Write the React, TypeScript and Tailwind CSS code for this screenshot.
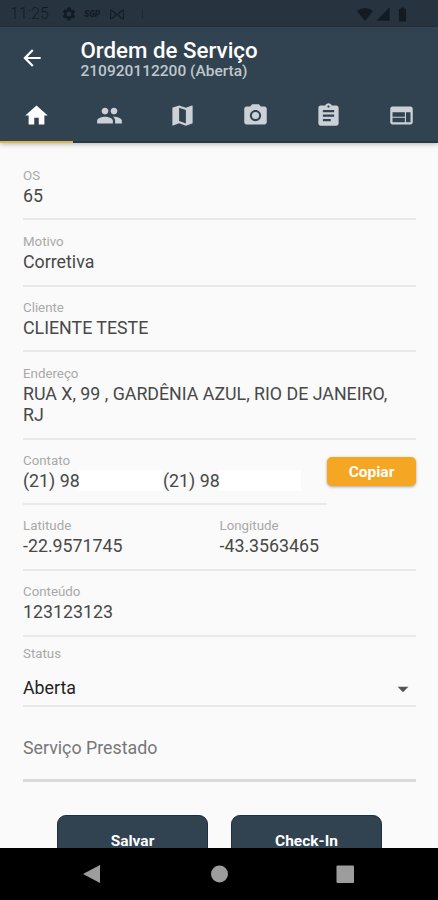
import type { ReactNode } from 'react'
import clsx from 'clsx'
import {
  MdArrowBack,
  MdArrowDropDown,
  MdAssignment,
  MdBatteryFull,
  MdCameraAlt,
  MdHome,
  MdMap,
  MdPeople,
  MdSettings,
  MdSignalCellular4Bar,
  MdWeb,
} from 'react-icons/md'

const tabs = [
  { name: 'home', icon: MdHome },
  { name: 'people', icon: MdPeople },
  { name: 'map', icon: MdMap },
  { name: 'photos', icon: MdCameraAlt },
  { name: 'tasks', icon: MdAssignment },
  { name: 'web', icon: MdWeb },
]

function StatusBar() {
  return (
    <div className="flex h-[27px] shrink-0 items-center bg-[#27343f] pt-px pr-[27px] pl-[10px] text-[#121b24]">
      <span className="w-[51px] text-[16px] leading-none font-light">11:25</span>
      <MdSettings className="size-4" />
      <span className="ml-[7px] w-[18px] text-[8.5px] leading-none font-black italic">SGP</span>
      <svg className="ml-[7px] h-[11px] w-[16px]" viewBox="0 0 17 13" fill="none" stroke="currentColor" strokeWidth="1.1">
        <path d="M1 1v11l5-4V5zM16 1v11l-5-4V5zM3 1l11 11M14 1L3 12" />
      </svg>
      <span className="ml-[17px] h-[10px] w-px bg-[#1d2832]" />
      <svg className="ml-auto h-[13px] w-4" viewBox="0 0 16 13" fill="currentColor">
        <path d="M0 3Q8-3 16 3L8 13z" />
      </svg>
      <MdSignalCellular4Bar className="ml-[2px] size-[16px]" />
      <MdBatteryFull className="ml-[3px] size-[17px]" />
    </div>
  )
}

function Header() {
  return (
    <header className="relative z-10 flex h-[116px] shrink-0 flex-col bg-[#314250] shadow-[0_1px_5px_rgba(0,0,0,0.3)]">
      <div className="flex h-[61px] items-center pt-[2px] pl-[19px] text-white">
        <MdArrowBack className="-mt-px size-[26px]" />
        <div className="ml-[35.5px] pt-px">
          <h1 className="text-[22.3px] leading-[24px] font-medium">Ordem de Serviço</h1>
          <p className="text-[15.5px] leading-[18px] font-medium text-[#bfc7cd]">210920112200 (Aberta)</p>
        </div>
      </div>
      <nav className="grid flex-1 grid-cols-6">
        {tabs.map(({ name, icon: Icon }, i) => (
          <button
            key={name}
            className={clsx(
              'flex justify-center border-b-2 pt-[14px]',
              i === 0 ? 'border-[#e2b24d] text-white' : 'border-[#213a45] text-[#cbd1d6]'
            )}
          >
            <Icon className="size-[27px]" />
          </button>
        ))}
      </nav>
    </header>
  )
}

function Field({ label, className, children }: { label: string; className?: string; children: ReactNode }) {
  return (
    <div className={clsx('pt-[13px]', className)}>
      <div className="text-[13.3px] leading-[17px] text-[#a9a9a9]">{label}</div>
      <div className="mt-px text-[17.8px] leading-[21px] text-[#484848]">{children}</div>
    </div>
  )
}

export default function App() {
  return (
    <div className="flex h-[900px] w-[438px] flex-col overflow-hidden bg-[#fafafa] font-['Roboto',sans-serif]">
      <StatusBar />
      <Header />

      <main className="flex min-h-0 flex-1 flex-col overflow-hidden pt-[11px] pr-[22px] pl-[23px] *:shrink-0">
        <Field label="OS" className="h-[66px] border-b-2 border-[#e9e9e9]">65</Field>
        <Field label="Motivo" className="h-[67px] border-b-2 border-[#e9e9e9]">Corretiva</Field>
        <Field label="Cliente" className="-mt-px h-[66px] border-b-2 border-[#e9e9e9]">CLIENTE TESTE</Field>
        <Field label="Endereço" className="h-[88px] border-b-2 border-[#e9e9e9]">
          RUA X, 99 , GARDÊNIA AZUL, RIO DE JANEIRO,
          <br />
          RJ
        </Field>
        <div className="flex h-[65px]">
          <Field label="Contato" className="-mt-px w-[304px] border-b-2 border-[#e9e9e9]">
            <div className="flex">
              <span className="w-[56px] whitespace-nowrap">(21) 98</span>
              <span className="w-[84px] bg-white" />
              <span className="w-[56px] whitespace-nowrap">(21) 98</span>
              <span className="w-[82px] bg-white" />
            </div>
          </Field>
          <button className="mt-[17px] h-[29px] w-[89px] rounded-[5px] bg-[#f5a623] pt-[2px] text-[15.5px] font-bold text-white shadow-[0_1px_3px_rgba(0,0,0,0.35)]">
            Copiar
          </button>
        </div>
        <div className="-mt-px grid h-[67px] grid-cols-2 border-b-2 border-[#e9e9e9]">
          <Field label="Latitude">-22.9571745</Field>
          <Field label="Longitude">-43.3563465</Field>
        </div>
        <Field label="Conteúdo" className="-mt-px h-[67px] border-b-2 border-[#e9e9e9]">123123123</Field>

        <div className="h-[70px] border-b-2 border-[#e9e9e9] pt-[8px]">
          <div className="text-[13.3px] leading-[17px] text-[#a9a9a9]">Status</div>
          <div className="mt-[16px] flex h-[21px] items-center justify-between text-[17.8px] text-[#222]">
            Aberta
            <MdArrowDropDown className="size-[26px] text-[#555]" />
          </div>
        </div>

        <div className="h-[75px] border-b-[3px] border-[#dadada] pt-[30px] text-[17.8px] leading-[22px] text-[#777]">
          Serviço Prestado
        </div>

        <div className="mt-[33px] flex justify-center gap-[23px]">
          <button className="h-[52px] w-[151px] rounded-[9px] border border-[#1c3040] bg-[#314250] pt-px text-[15.5px] font-bold text-white">
            Salvar
          </button>
          <button className="h-[52px] w-[151px] rounded-[9px] border border-[#1c3040] bg-[#314250] pt-px text-[15.5px] font-bold text-white">
            Check-In
          </button>
        </div>
      </main>

      <footer className="h-[52px] shrink-0 bg-black">
        <svg className="h-[52px] w-[438px]" viewBox="0 0 438 52" fill="#9d9d9d">
          <path d="M83 26l17-9v18z" />
          <circle cx="219.5" cy="26" r="8.5" />
          <rect x="336.5" y="17.5" width="17.5" height="17.5" rx="1" />
        </svg>
      </footer>
    </div>
  )
}
